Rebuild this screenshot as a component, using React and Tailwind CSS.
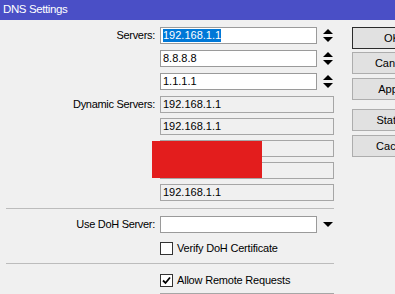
import React from "react";

const font = { fontFamily: '"Liberation Sans", Arial, sans-serif' };

function Spin() {
  return (
    <svg width="10" height="17" viewBox="0 0 10 17" className="ml-[6px]">
      <polygon points="0,7 5,2 10,7" fill="#000" />
      <polygon points="0,10 10,10 5,15" fill="#000" />
    </svg>
  );
}

function Field({ children, editable, w = "w-[157px]" }) {
  return (
    <div
      className={`${w} h-[17px] border flex items-center pl-[2px] text-[11px] leading-none text-black ${
        editable ? "bg-white border-[#9a9a9a]" : "bg-[#f0f0f0] border-[#a6a6a6]"
      }`}
    >
      {children}
    </div>
  );
}

function Row({ label, children, className = "" }) {
  return (
    <div className={`flex items-center h-[17px] ${className}`}>
      <div className="w-[155px] text-right text-[11px] tracking-[-0.3px] text-black whitespace-nowrap">
        {label}
      </div>
      <div className="ml-[5px] flex items-center">{children}</div>
    </div>
  );
}

function Check({ checked, label, className = "" }) {
  return (
    <div className={`flex items-center h-[13px] pl-[160px] ${className}`}>
      <div className="w-[13px] h-[13px] border border-[#333] bg-white flex items-center justify-center">
        {checked && (
          <svg width="9" height="9" viewBox="0 0 9 9">
            <polyline points="1,4.5 3.5,7 8,1.5" fill="none" stroke="#000" strokeWidth="1.8" />
          </svg>
        )}
      </div>
      <span className="ml-[4px] text-[11px] tracking-[-0.2px] text-black whitespace-nowrap">{label}</span>
    </div>
  );
}

function Btn({ children, def, className = "" }) {
  return (
    <div
      className={`w-[80px] h-[22px] shrink-0 flex items-center justify-center bg-[#e1e1e1] border text-[11px] text-black ${
        def ? "border-[#2b2b2b]" : "border-[#adadad]"
      } ${className}`}
    >
      {children}
    </div>
  );
}

export default function App() {
  return (
    <div className="w-[395px] h-[294px] overflow-hidden bg-[#f0f0f0]" style={font}>
      <div className="h-[20px] bg-[#4a4fc6] text-white text-[11.5px] tracking-[-0.4px] flex items-center pl-[3px]">
        DNS Settings
      </div>
      <div className="flex">
        <div className="w-[352px] shrink-0 pt-[7px]">
          <Row label="Servers:">
            <Field editable>
              <span className="bg-[#0078d7] text-white leading-[13px]">192.168.1.1</span>
            </Field>
            <Spin />
          </Row>
          <Row label="" className="mt-[6px]">
            <Field editable>8.8.8.8</Field>
            <Spin />
          </Row>
          <Row label="" className="mt-[6px]">
            <Field editable>1.1.1.1</Field>
            <Spin />
          </Row>

          <div className="relative">
            <Row label="Dynamic Servers:" className="mt-[6px]">
              <Field w="w-[174px]">192.168.1.1</Field>
            </Row>
            <Row label="" className="mt-[5px]">
              <Field w="w-[174px]">192.168.1.1</Field>
            </Row>
            <Row label="" className="mt-[5px]">
              <Field w="w-[174px]"></Field>
            </Row>
            <Row label="" className="mt-[5px]">
              <Field w="w-[174px]"></Field>
            </Row>
            <Row label="" className="mt-[5px]">
              <Field w="w-[174px]">192.168.1.1</Field>
            </Row>
            <div className="absolute left-[152px] top-[45px] w-[110px] h-[37px] bg-[#e31d1d]" />
          </div>

          <div className="mt-[7px] ml-[6px] w-[328px] h-px bg-[#bcbcbc]" />

          <Row label="Use DoH Server:" className="mt-[7px]">
            <Field editable></Field>
            <svg width="10" height="17" viewBox="0 0 10 17" className="ml-[6px]">
              <polygon points="0,6 10,6 5,11" fill="#000" />
            </svg>
          </Row>
          <Check label="Verify DoH Certificate" className="mt-[9px]" />

          <div className="mt-[8px] ml-[6px] w-[328px] h-px bg-[#bcbcbc]" />

          <Check checked label="Allow Remote Requests" className="mt-[10px]" />
          <div className="mt-[6px] ml-[160px]">
            <Field w="w-[174px]"></Field>
          </div>
        </div>

        <div className="flex flex-col pt-[7px]">
          <Btn def>OK</Btn>
          <Btn className="mt-[3px]">Cancel</Btn>
          <Btn className="mt-[4px]">Apply</Btn>
          <Btn className="mt-[9px]">Status</Btn>
          <Btn className="mt-[4px]">Cache</Btn>
        </div>
      </div>
    </div>
  );
}
